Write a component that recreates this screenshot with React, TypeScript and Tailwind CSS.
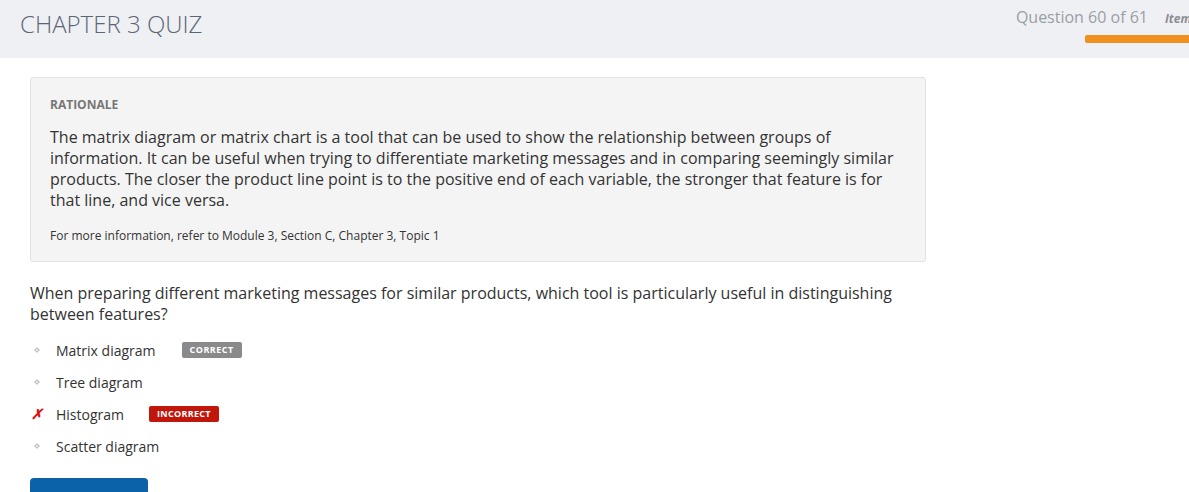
import React from 'react';

const font = { fontFamily: '"Open Sans", "Noto Sans", sans-serif' };

const options = [
  { label: 'Matrix diagram', badge: 'correct' },
  { label: 'Tree diagram' },
  { label: 'Histogram', badge: 'incorrect', wrong: true },
  { label: 'Scatter diagram' },
];

export default function App() {
  return (
    <div className="min-h-[492px] bg-white text-[#333]" style={font}>
      <header className="flex h-[58px] justify-between bg-[#eff0f4]">
        <h1 className="pl-[20px] pt-[8px] text-[24px] font-light leading-[32px] text-[#5a6675]">
          CHAPTER 3 QUIZ
        </h1>
        <div className="flex flex-col items-end pt-[5px]">
          <div className="flex items-baseline">
            <span className="text-[16px] leading-[24px] text-[#9a9ea6]">Question 60 of 61</span>
            <span className="ml-[17px] w-[24px] overflow-hidden whitespace-nowrap text-[12px] font-bold italic text-[#8a8e96]">
              Item
            </span>
          </div>
          <div className="mt-[6px] h-[8px] w-[104px] rounded-l-[2px] bg-[#f0901e]" />
        </div>
      </header>

      <main className="px-[30px] pt-[19px]">
        <section className="w-[896px] rounded-[3px] border border-[#e2e2e2] bg-[#f4f4f4] px-[19px] pb-[16px] pt-[17px]">
          <h2 className="text-[12px] font-bold leading-[20px] text-[#777]">RATIONALE</h2>
          <p className="mt-[12px] text-[16px] leading-[21px] text-[#333]">
            The matrix diagram or matrix chart is a tool that can be used to show the relationship between groups of
            information. It can be useful when trying to differentiate marketing messages and in comparing seemingly similar
            products. The closer the product line point is to the positive end of each variable, the stronger that feature is for
            that line, and vice versa.
          </p>
          <p className="mt-[16px] text-[12px] leading-[18px] text-[#333]">
            For more information, refer to Module 3, Section C, Chapter 3, Topic 1
          </p>
        </section>

        <p className="mt-[21px] w-[880px] text-[16px] leading-[21px] text-[#333]">
          When preparing different marketing messages for similar products, which tool is particularly useful in distinguishing
          between features?
        </p>

        <ul className="mt-[15px] flex flex-col gap-[12px]">
          {options.map((o) => (
            <li key={o.label} className="flex h-[20px] items-center text-[14px] text-[#333]">
              <span className="flex w-[26px] justify-center pr-[12px]">
                {o.wrong ? (
                  <span className="text-[14px] font-bold italic leading-none text-[#e01010]">✗</span>
                ) : (
                  <span className="h-[4px] w-[4px] rotate-45 border border-[#bbb] bg-[#eee]" />
                )}
              </span>
              <span>{o.label}</span>
              {o.badge === 'correct' && (
                <span className="ml-[26px] rounded-[2px] bg-[#8a8a8a] px-[8px] py-[2px] text-[9px] font-bold leading-[12px] tracking-[0.5px] text-white">
                  CORRECT
                </span>
              )}
              {o.badge === 'incorrect' && (
                <span className="ml-[25px] rounded-[2px] bg-[#c0160c] px-[8px] py-[2px] text-[9px] font-bold leading-[12px] tracking-[0.3px] text-white">
                  INCORRECT
                </span>
              )}
            </li>
          ))}
        </ul>

        <button className="mt-[22px] h-[40px] w-[118px] rounded-[4px] bg-[#0b62a8] text-[15px] text-white">
          Next question
        </button>
      </main>
    </div>
  );
}
